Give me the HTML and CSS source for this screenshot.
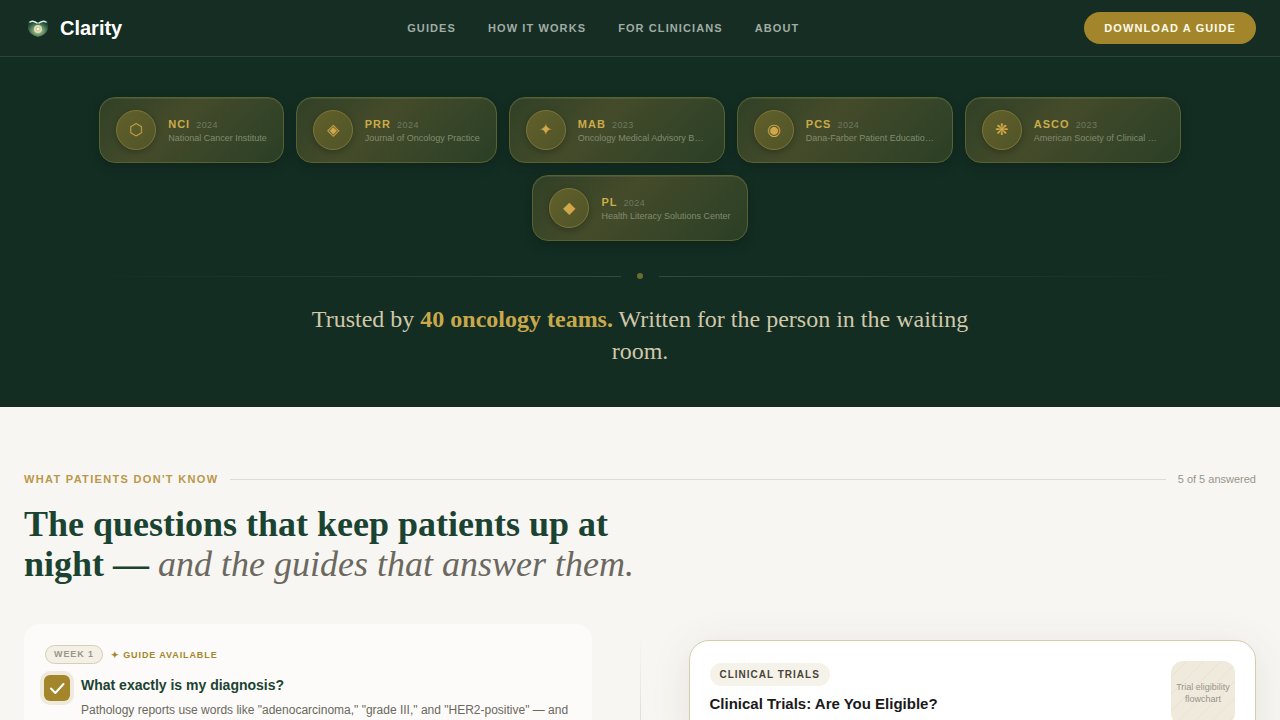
FILE: index.html
```html
<!DOCTYPE html>
<html lang="en">
<head>
    <meta charset="UTF-8">
    <meta name="viewport" content="width=device-width, initial-scale=1">
    <title>Clarity</title>
    <link rel="stylesheet" href="styles.css">
</head>
<body>
<header class="header">
    <a class="brand" href="#">
        <svg class="logo" viewBox="0 0 28 28" aria-hidden="true">
            <defs>
                <radialGradient id="glow" cx="50%" cy="60%" r="60%">
                    <stop offset="0" stop-color="#e4e8b4"/>
                    <stop offset="0.4" stop-color="#7f9f72"/>
                    <stop offset="0.8" stop-color="#2f5f49"/>
                    <stop offset="1" stop-color="#1d4132"/>
                </radialGradient>
            </defs>
            <path d="M4 7 Q14 9 24 7 V15 Q22 21 14 23 Q6 21 4 15Z" fill="url(#glow)"/>
            <path d="M6 8 Q9 6 13 9 M15 9 Q19 6 22 8" fill="none" stroke="#d9efe1" stroke-width="1.5" stroke-linecap="round"/>
            <circle cx="14" cy="15" r="4" fill="#dbe0b2"/>
            <path d="M12 14 Q13 12 14 14 Q15 12 16 14 Q16 16 14 17 Q12 16 12 14Z" fill="#fff8df" stroke="#b8a878" stroke-width="0.6"/>
        </svg>
        <span>Clarity</span>
    </a>
    <nav class="nav">
        <a href="#">Guides</a>
        <a href="#">How it works</a>
        <a href="#">For clinicians</a>
        <a href="#">About</a>
    </nav>
    <button class="download" type="button">Download a guide</button>
</header>

<section class="hero">
    <div class="badges">
        <div class="badge">
            <div class="seal">⬡</div>
            <div class="info">
                <div class="name">NCI <span class="year">2024</span></div>
                <div class="org">National Cancer Institute</div>
            </div>
        </div>
        <div class="badge">
            <div class="seal">◈</div>
            <div class="info">
                <div class="name">PRR <span class="year">2024</span></div>
                <div class="org">Journal of Oncology Practice</div>
            </div>
        </div>
        <div class="badge">
            <div class="seal">✦</div>
            <div class="info">
                <div class="name">MAB <span class="year">2023</span></div>
                <div class="org">Oncology Medical Advisory Board</div>
            </div>
        </div>
        <div class="badge">
            <div class="seal">◉</div>
            <div class="info">
                <div class="name">PCS <span class="year">2024</span></div>
                <div class="org">Dana-Farber Patient Education Center</div>
            </div>
        </div>
        <div class="badge">
            <div class="seal">❋</div>
            <div class="info">
                <div class="name">ASCO <span class="year">2023</span></div>
                <div class="org">American Society of Clinical Oncology</div>
            </div>
        </div>
        <div class="badge">
            <div class="seal">◆</div>
            <div class="info">
                <div class="name">PL <span class="year">2024</span></div>
                <div class="org">Health Literacy Solutions Center</div>
            </div>
        </div>
    </div>
    <div class="divider"><span class="dot"></span></div>
    <p class="trust">Trusted by <strong>40 oncology teams.</strong> Written for the person in the waiting room.</p>
</section>

<main class="questions">
    <div class="eyebrow">
        <span class="eyebrow-title">What patients don't know</span>
        <span class="eyebrow-count">5 of 5 answered</span>
    </div>
    <h2 class="title">The questions that keep patients up at night — <em>and the guides that answer them.</em></h2>

    <div class="columns">
        <article class="question">
            <div class="tags">
                <span class="week">Week 1</span>
                <span class="available">✦ Guide available</span>
            </div>
            <div class="row">
                <div class="check">
                    <input type="checkbox" id="q1" checked>
                    <svg viewBox="0 0 26 26" aria-hidden="true"><path d="M7 13.5 L11.3 18 L19.5 9" fill="none" stroke="#fff" stroke-width="2" stroke-linecap="round" stroke-linejoin="round"/></svg>
                </div>
                <div class="text">
                    <label for="q1">What exactly is my diagnosis?</label>
                    <p>Pathology reports use words like "adenocarcinoma," "grade III," and "HER2-positive" — and</p>
                </div>
            </div>
        </article>
        <div class="rule"></div>
        <article class="guide">
            <div>
                <span class="topic">Clinical Trials</span>
                <h3>Clinical Trials: Are You Eligible?</h3>
            </div>
            <div class="thumb">Trial eligibility flowchart</div>
        </article>
    </div>
</main>
</body>
</html>
```
FILE: styles.css
```css
*{
    box-sizing: border-box;
    margin: 0;
    padding: 0;
}
body{
    font-family: "Liberation Sans", Arial, sans-serif;
    background-color: #f8f6f2;
    color: #1a1a1a;
}
a{
    color: inherit;
    text-decoration: none;
}

/* header */
.header{
    display: flex;
    align-items: center;
    justify-content: space-between;
    height: 57px;
    padding: 0 24px;
    background-color: #152d23;
    border-bottom: 1px solid #28463a;
}
.brand{
    display: flex;
    align-items: center;
    gap: 8px;
    color: #fff;
    font-size: 20px;
    font-weight: bold;
}
.logo{
    width: 28px;
    height: 28px;
}
.nav{
    display: flex;
    gap: 32px;
    color: #a1aca5;
    font-size: 11px;
    font-weight: bold;
    letter-spacing: 0.1em;
    text-transform: uppercase;
}
.download{
    height: 32px;
    padding: 0 20px;
    border: none;
    border-radius: 16px;
    background-color: #a3862b;
    color: #fffbe9;
    font-family: inherit;
    font-size: 11px;
    font-weight: bold;
    letter-spacing: 0.1em;
    text-transform: uppercase;
}

/* hero */
.hero{
    padding: 40px 24px;
    background-color: #132d23;
}
.badges{
    display: flex;
    flex-wrap: wrap;
    justify-content: center;
    gap: 12px;
    max-width: 1100px;
    margin: 0 auto;
}
.badge{
    display: flex;
    align-items: center;
    gap: 12px;
    padding: 12px 16px;
    border: 1px solid #56632f;
    border-radius: 16px;
    background: linear-gradient(135deg, #304026 0%, #444b2a 40%, #2a3f26 100%);
    box-shadow: 0 4px 12px rgba(0, 0, 0, 0.2), inset 0 1px 0 rgba(255, 255, 255, 0.08);
}
.seal{
    display: flex;
    align-items: center;
    justify-content: center;
    width: 40px;
    height: 40px;
    border: 1px solid #7c7537;
    border-radius: 50%;
    background: linear-gradient(135deg, #62602b, #4f5428);
    box-shadow: 0 2px 6px rgba(0, 0, 0, 0.25);
    color: #d0a84b;
    font-size: 16px;
    line-height: 16px;
}
.info{
    padding-top: 2px;
}
.name{
    color: #cbab49;
    font-size: 11px;
    line-height: 14px;
    font-weight: bold;
    letter-spacing: 1px;
}
.year{
    margin-left: 2px;
    color: #6d7961;
    font-size: 9px;
    font-weight: normal;
    letter-spacing: 0.05em;
}
.org{
    max-width: 130px;
    overflow: hidden;
    color: #818b70;
    font-size: 9px;
    line-height: 13px;
    text-overflow: ellipsis;
    white-space: nowrap;
}
.divider{
    display: flex;
    align-items: center;
    gap: 16px;
    max-width: 1100px;
    margin: 32px auto 24px;
}
.divider::before,.divider::after{
    content: "";
    flex: 1;
    height: 1px;
    background: linear-gradient(to right, transparent, #2d4e3c);
}
.divider::after{
    background: linear-gradient(to left, transparent, #2d4e3c);
}
.dot{
    width: 6px;
    height: 6px;
    border-radius: 50%;
    background-color: #6c6c30;
}
.trust{
    max-width: 700px;
    margin: 0 auto;
    color: #d0c8a9;
    font-family: "Liberation Serif", "Times New Roman", serif;
    font-size: 24px;
    line-height: 32px;
    text-align: center;
}
.trust strong{
    color: #c9a84c;
}

/* questions */
.questions{
    padding: 64px 24px;
}
.eyebrow{
    display: flex;
    align-items: center;
    gap: 12px;
    font-size: 11px;
    line-height: 17px;
}
.eyebrow::before{
    content: "";
    order: 1;
    flex: 1;
    height: 1px;
    background-color: #e0ddd4;
}
.eyebrow-title{
    color: #b8984a;
    font-weight: bold;
    letter-spacing: 0.12em;
    text-transform: uppercase;
}
.eyebrow-count{
    order: 2;
    color: #98958d;
}
.title{
    max-width: 672px;
    margin: 16px 0 40px;
    color: #1b4332;
    font-family: "Liberation Serif", "Times New Roman", serif;
    font-size: 36px;
    line-height: 40px;
}
.title em{
    color: #6b6860;
    font-weight: normal;
}
.columns{
    display: grid;
    grid-template-columns: 1fr 1px 1fr;
    gap: 48px;
}
.question{
    padding: 20px;
    border-radius: 16px;
    background-color: #fcfbf9;
}
.tags{
    display: flex;
    align-items: center;
    gap: 8px;
    padding: 1px 1px 0;
    font-size: 9px;
    font-weight: bold;
    letter-spacing: 0.1em;
    text-transform: uppercase;
}
.week{
    padding: 0 8px;
    border: 1px solid #d6cfb5;
    border-radius: 10px;
    background-color: #f4f0e6;
    color: #9a958a;
    line-height: 17px;
}
.available{
    color: #a3862b;
}
.row{
    display: flex;
    gap: 11px;
    margin-top: 11px;
}
.check{
    display: grid;
    flex: none;
    width: 26px;
    height: 26px;
}
.check input,.check svg{
    grid-area: 1 / 1;
    width: 26px;
    height: 26px;
}
.check input{
    appearance: none;
    border-radius: 6px;
    background-color: #a3862b;
    box-shadow: 0 0 0 4px #eeeadc;
}
.check svg{
    pointer-events: none;
}
.text label{
    display: block;
    color: #1b4332;
    font-size: 14px;
    line-height: 20px;
    font-weight: bold;
}
.text p{
    margin-top: 5px;
    color: #6b6860;
    font-size: 12px;
    line-height: 20px;
}
.rule{
    margin-top: 16px;
    background: linear-gradient(to bottom, transparent, #d9d6cc);
}
.guide{
    display: flex;
    justify-content: space-between;
    gap: 16px;
    margin-top: 16px;
    padding: 20px;
    border: 1px solid #d5cdac;
    border-radius: 20px;
    background-color: #fff;
    box-shadow: 0 8px 40px rgba(27, 67, 50, 0.1);
}
.topic{
    display: inline-block;
    margin-top: 2px;
    padding: 0 10px;
    border-radius: 12px;
    background-color: #f5f2ea;
    color: #4a4538;
    font-size: 10px;
    line-height: 23px;
    font-weight: bold;
    letter-spacing: 1px;
    text-transform: uppercase;
}
.guide h3{
    margin-top: 8px;
    font-size: 15px;
    line-height: 20px;
}
.thumb{
    display: flex;
    align-items: center;
    flex: none;
    width: 64px;
    height: 64px;
    border-radius: 12px;
    background: repeating-linear-gradient(135deg, #f0eadd 0, #f0eadd 11px, #e8e2d5 11px, #e8e2d5 12px);
    color: #98948a;
    font-size: 9px;
    line-height: 12px;
    text-align: center;
}
```
